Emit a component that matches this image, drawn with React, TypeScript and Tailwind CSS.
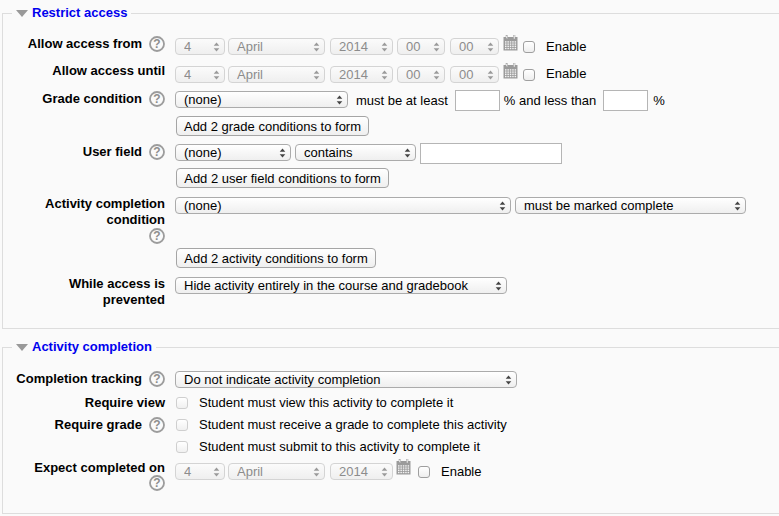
import type { ReactNode } from 'react';

const months = ['April'];

function HelpIcon() {
  return (
    <svg width="16" height="16" viewBox="0 0 16 16" className="shrink-0">
      <circle cx="8" cy="8" r="7" fill="#fafafa" stroke="#9c9c9c" strokeWidth="1.8" />
      <text x="8" y="12.4" textAnchor="middle" fontSize="12" fontWeight="700" fill="#8e8e8e" fontFamily="Liberation Sans, sans-serif">
        ?
      </text>
    </svg>
  );
}

function CalendarIcon() {
  const cells = [];
  for (let r = 0; r < 4; r++) {
    for (let c = 0; c < 5; c++) {
      cells.push(<rect key={`${r}-${c}`} x={2 + c * 2.4} y={6.2 + r * 2.2} width="1.5" height="1.4" fill="#f4f4f4" />);
    }
  }
  return (
    <svg width="15" height="16" viewBox="0 0 15 16" className="shrink-0">
      <rect x="0.5" y="2" width="14" height="13.5" fill="#9b9b9b" />
      <rect x="3" y="0" width="1.5" height="4" fill="#f4f4f4" stroke="#9b9b9b" strokeWidth="0.5" />
      <rect x="10.5" y="0" width="1.5" height="4" fill="#f4f4f4" stroke="#9b9b9b" strokeWidth="0.5" />
      {cells}
    </svg>
  );
}

function Select({ value, width, disabled }: { value: string; width: string; disabled?: boolean }) {
  return (
    <div className={`relative h-[17px] shrink-0 ${width}`}>
      <select
        disabled={disabled}
        defaultValue={value}
        className={
          disabled
            ? 'block w-full h-full appearance-none rounded-[4px] border border-[#d4d4d4] bg-gradient-to-b from-[#fbfbfb] to-[#efefef] pl-[8px] text-[13px] leading-[15px] text-[#8c8c8c] opacity-100'
            : 'block w-full h-full appearance-none rounded-[4px] border border-[#ababab] bg-gradient-to-b from-white to-[#efefef] pl-[8px] text-[13px] leading-[15px] text-black'
        }
      >
        <option>{value}</option>
      </select>
      <svg width="7" height="10" viewBox="0 0 7 10" className="absolute right-[5px] top-[4px] pointer-events-none">
        <path d="M3.5 0.5 L6.3 3.8 H0.7 Z M3.5 9.5 L6.3 6.2 H0.7 Z" fill={disabled ? '#9a9a9a' : '#444'} />
      </svg>
    </div>
  );
}

function TextInput({ width }: { width: string }) {
  return <input type="text" className={`block h-[21px] shrink-0 border border-[#b5b5b5] bg-white ${width}`} />;
}

function AddButton({ children, width }: { children: ReactNode; width: string }) {
  return (
    <button className={`block ml-px h-[20px] rounded-[4px] border border-[#a5a5a5] bg-gradient-to-b from-white to-[#efefef] text-[13px] leading-[17px] text-black ${width}`}>
      {children}
    </button>
  );
}

function Checkbox({ disabled }: { disabled?: boolean }) {
  return (
    <input
      type="checkbox"
      disabled={disabled}
      className={
        disabled
          ? 'block h-[12px] w-[12px] shrink-0 appearance-none rounded-[3px] border border-[#cfcfcf] bg-gradient-to-b from-white to-[#f0f0f0]'
          : 'block h-[12px] w-[12px] shrink-0 appearance-none rounded-[3px] border border-[#9f9f9f] bg-gradient-to-b from-white to-[#eeeeee]'
      }
    />
  );
}

function Row({ label, help, helpBelow, raised, height, children }: { label: ReactNode; help?: boolean; helpBelow?: boolean; raised?: boolean; height: string; children?: ReactNode }) {
  return (
    <div className={`flex ${height}`}>
      <div className={`w-[162px] shrink-0 text-right text-[13px] font-bold leading-[16px] text-black ${raised ? '' : 'pt-px'}`}>
        {help ? (
          <div className="flex justify-end gap-[7px]">
            <span>{label}</span>
            <HelpIcon />
          </div>
        ) : (
          <div>{label}</div>
        )}
        {helpBelow && (
          <div className={`flex justify-end ${raised ? '' : '-mt-px'}`}>
            <HelpIcon />
          </div>
        )}
      </div>
      <div className="ml-[10px] flex flex-col items-start pt-px">{children}</div>
    </div>
  );
}

function DateFields({ time, enableTop = 'mt-[3px]' }: { time?: boolean; enableTop?: string }) {
  return (
    <div className="flex items-start">
      <div className="flex gap-[3px] pt-[2px]">
        <Select value="4" width="w-[50px]" disabled />
        <Select value={months[0]} width="w-[97px]" disabled />
        <div className="ml-[2px]">
          <Select value="2014" width="w-[63px]" disabled />
        </div>
        {time && <div className="ml-px"><Select value="00" width="w-[48px]" disabled /></div>}
        {time && <div className="ml-[2px]"><Select value="00" width="w-[49px]" disabled /></div>}
      </div>
      <div className={time ? 'ml-[4px] -mt-px' : 'ml-[3px] -mt-[2px]'}>
        <CalendarIcon />
      </div>
      <div className={time ? 'ml-[5px] mt-[5px]' : 'ml-[7px] mt-[5px]'}>
        <Checkbox />
      </div>
      <span className={`ml-[11px] text-[13px] leading-[16px] ${enableTop}`}>Enable</span>
    </div>
  );
}

function Section({ title, children, height, top }: { title: string; children: ReactNode; height: string; top: string }) {
  return (
    <fieldset className={`ml-[2px] border border-r-0 border-[#dddddd] ${top} ${height}`}>
      <legend className="ml-[9px] flex items-center px-[4px] text-[13px] font-bold leading-[16px] text-[#0000ee]">
        <svg width="12" height="7" viewBox="0 0 12 7" className="mr-[4px]">
          <path d="M0 0 H12 L6 7 Z" fill="#999999" />
        </svg>
        {title}
      </legend>
      {children}
    </fieldset>
  );
}

function CheckRow({ text, disabled }: { text: string; disabled?: boolean }) {
  return (
    <div className="ml-px flex items-center gap-[11px] text-[13px] leading-[16px]">
      <Checkbox disabled={disabled} />
      <span>{text}</span>
    </div>
  );
}

export default function App() {
  return (
    <div
      className="h-[516px] w-[779px] overflow-hidden bg-[#fafafa] pt-[5px] text-black"
      style={{ fontFamily: '"Liberation Sans", Arial, sans-serif' }}
    >
      <Section title="Restrict access" height="h-[324px]" top="pt-[14px]">
        <Row label="Allow access from" help height="h-[28px]">
          <DateFields time />
        </Row>
        <Row label="Allow access until" raised height="h-[27px]">
          <DateFields time enableTop="mt-[2px]" />
        </Row>
        <Row label="Grade condition" help height="h-[53px]">
          <div className="flex items-start text-[13px] leading-[16px]">
            <Select value="(none)" width="w-[173px]" />
            <span className="ml-[8px] mt-[2px]">must be at least</span>
            <div className="ml-[7px] -mt-px">
              <TextInput width="w-[45px]" />
            </div>
            <span className="ml-[4px] mt-[2px]">% and less than</span>
            <div className="ml-[7px] -mt-px">
              <TextInput width="w-[45px]" />
            </div>
            <span className="ml-[5px] mt-[2px]">%</span>
          </div>
          <div className="mt-[5px]">
            <AddButton width="w-[193px]">Add 2 grade conditions to form</AddButton>
          </div>
        </Row>
        <Row label="User field" help height="h-[53px]">
          <div className="flex items-start gap-[4px]">
            <Select value="(none)" width="w-[116px]" />
            <Select value="contains" width="w-[121px]" />
            <div className="-mt-px">
              <TextInput width="w-[142px]" />
            </div>
          </div>
          <div className="mt-[4px]">
            <AddButton width="w-[213px]">Add 2 user field conditions to form</AddButton>
          </div>
        </Row>
        <Row label={<>Activity completion<br />condition</>} helpBelow raised height="h-[80px]">
          <div className="flex gap-[4px]">
            <Select value="(none)" width="w-[336px]" />
            <Select value="must be marked complete" width="w-[231px]" />
          </div>
          <div className="mt-[34px]">
            <AddButton width="w-[200px]">Add 2 activity conditions to form</AddButton>
          </div>
        </Row>
        <Row label={<>While access is<br />prevented</>} raised height="h-[40px]">
          <Select value="Hide activity entirely in the course and gradebook" width="w-[332px]" />
        </Row>
      </Section>
      <div className="mt-[10px]">
        <Section title="Activity completion" height="h-[175px]" top="pt-[15px]">
          <Row label="Completion tracking" help height="h-[24px]">
            <Select value="Do not indicate activity completion" width="w-[342px]" />
          </Row>
          <Row label="Require view" height="h-[22px]">
            <CheckRow text="Student must view this activity to complete it" disabled />
          </Row>
          <Row label="Require grade" help height="h-[22px]">
            <CheckRow text="Student must receive a grade to complete this activity" disabled />
          </Row>
          <Row label="" height="h-[21px]">
            <CheckRow text="Student must submit to this activity to complete it" disabled />
          </Row>
          <Row label="Expect completed on" helpBelow height="h-[40px]">
            <div className="pt-px">
              <DateFields />
            </div>
          </Row>
        </Section>
      </div>
    </div>
  );
}
